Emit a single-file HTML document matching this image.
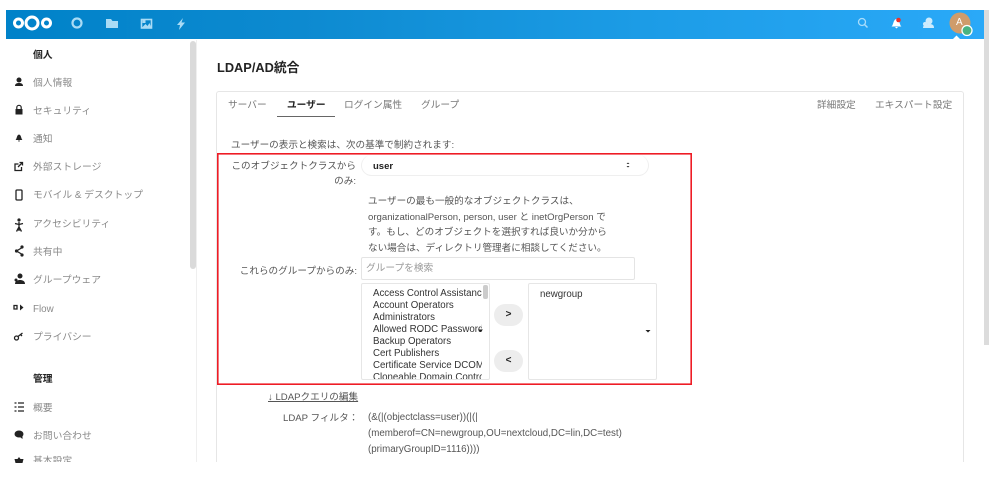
<!DOCTYPE html>
<html><head><meta charset="utf-8"><style>
html,body{margin:0;padding:0;width:1000px;height:501px;background:#fff;overflow:hidden}
body{position:relative;font-family:"Liberation Sans","Noto Sans CJK JP",sans-serif;color:#555}
#w{position:absolute;left:0;top:0;width:1000px;height:501px;filter:blur(.35px)}
.a{position:absolute;white-space:nowrap;line-height:14px}
.n{font-size:9.8px;left:33px;color:#8a8a8a}
.h{font-size:9.8px;left:33px;color:#222;font-weight:bold}
.t{font-size:9.7px;color:#777}
.m{font-size:9.6px;color:#555}
.f{font-size:9.75px;color:#555}
svg{position:absolute;overflow:visible}
</style></head><body><div id="w">
<div class="a" style="left:6px;top:10px;width:978px;height:29px;background:linear-gradient(90deg,#0082c9 0%,#0d8ad0 30%,#1c9ce6 65%,#2aa9f8 100%)"></div>
<svg style="left:0;top:0" width="1000" height="40">
<g fill="none" stroke="#fff">
<circle cx="18.500" cy="23" r="4" stroke-width="3"/><circle cx="32" cy="23" r="6" stroke-width="3"/><circle cx="46.500" cy="23" r="4" stroke-width="3"/>
<circle cx="77" cy="23" r="4.500" stroke-width="2.200" stroke="#a9dbf5"/>
</g>
<path d="M106 19h5l1.500 2h5.500v7h-12z" fill="#a9dbf5"/>
<rect x="141.500" y="19.500" width="10" height="8.500" fill="none" stroke="#a9dbf5" stroke-width="1.600"/>
<path d="M141.500 28l4-4 2 2 2-3 2 5z M142.500 20h3v3h-3z" fill="#a9dbf5"/>
<path d="M183 18l-6 7h3l-1 5 6-7.500h-3.500z" fill="#a9dbf5"/>
<circle cx="862" cy="22" r="3.500" fill="none" stroke="#a8dcfb" stroke-width="1.300"/><path d="M864.500 24.500l3 3" stroke="#a8dcfb" stroke-width="1.500"/>
<path d="M891.500 26.500c2-1 1.500-7 5-7.500 3.500.5 3 6.500 5 7.500z M895 27h3l-1.500 1.500z" fill="#fff"/><circle cx="898.500" cy="20" r="2.300" fill="#e9322d"/>
<circle cx="929" cy="21" r="3.500" fill="#cdebfd"/><path d="M923 28c0-3.500 3-4 6-4s5 .5 5 4z" fill="#cdebfd"/><circle cx="925" cy="24" r="2" fill="#cdebfd"/>
<circle cx="960" cy="23" r="10.500" fill="#cf9c6b"/>
<path d="M953 39l3.500-3.500 3.500 3.500z" fill="#fff"/>
<circle cx="967" cy="30.500" r="5" fill="#49b382" stroke="#fff" stroke-width="1.300"/>
</svg>
<div class="a" style="left:956px;top:16px;font-size:10px;color:#fff">A</div>
<div class="a" style="left:984px;top:10px;width:5px;height:335px;background:#dcdcdc"></div>

<div class="a" style="left:190px;top:41px;width:6px;height:228px;background:#dadada;border-radius:3px"></div>
<div class="a" style="left:196px;top:40px;width:1px;height:422px;background:#efefef"></div>

<div class="a h" style="top:49px">個人</div>
<div class="a n" style="top:77px">個人情報</div>
<div class="a n" style="top:105px">セキュリティ</div>
<div class="a n" style="top:133px">通知</div>
<div class="a n" style="top:161px">外部ストレージ</div>
<div class="a n" style="top:189px">モバイル &amp; デスクトップ</div>
<div class="a n" style="top:218px">アクセシビリティ</div>
<div class="a n" style="top:246px">共有中</div>
<div class="a n" style="top:274px">グループウェア</div>
<div class="a n" style="top:303px">Flow</div>
<div class="a n" style="top:331px">プライバシー</div>
<div class="a h" style="top:373px">管理</div>
<div class="a n" style="top:402px">概要</div>
<div class="a n" style="top:430px">お問い合わせ</div>
<div style="position:absolute;left:0;top:452px;width:196px;height:10px;overflow:hidden"><div class="a n" style="top:3px">基本設定</div></div>

<svg style="left:0;top:0" width="30" height="462">
<g fill="#222">
<circle cx="19" cy="80" r="2.500"/><path d="M15 86c0-2.500 2-3 4-3s4 .5 4 3z"/>
<rect x="15.500" y="109" width="7" height="5.500"/><path d="M16.800 109v-1.500a2.200 2.200 0 0 1 4.400 0v1.500" fill="none" stroke="#222" stroke-width="1.200"/>
<path d="M15.500 140c1.500-1 1-5 3.500-5.500 2.500.5 2 4.500 3.500 5.500z M18 140.500h2l-1 1.500z"/>
</g>
<g fill="none" stroke="#222" stroke-width="1.300">
<path d="M21.500 167v3.500h-6.500v-6.500h3.500"/><path d="M18 167l4-4M19.500 162.500h3v3"/>
<rect x="16" y="190" width="6" height="10" rx="1"/>
<path d="M19 222v9M15 223.500l4 1 4-1M19 227l-2.500 4.500M19 227l2.500 4.500"/>
<path d="M21.500 248l-5 3 5 3"/>
<path d="M17 305.500h-3v3.500h3z" />
<circle cx="16.500" cy="338" r="2"/><path d="M18 336.500l4.500-3.500M20.500 334.500l1.500 1.500"/>
<path d="M18 403h6M18 407h6M18 411h6M14.500 403h2M14.500 407h2M14.500 411h2"/>
</g>
<g fill="#222">
<circle cx="19" cy="220" r="1.600"/>
<circle cx="22" cy="247" r="1.600"/><circle cx="22" cy="255" r="1.600"/><circle cx="16.500" cy="251" r="1.600"/>
<circle cx="20" cy="276" r="2.500"/><path d="M15 284c0-3 2.500-4 5-4s5 1 5 4z"/><circle cx="16" cy="280" r="1.500"/>
<path d="M20 304.500l3.500 3-3.500 3z"/>
<ellipse cx="19" cy="434" rx="4.500" ry="3.500"/><path d="M20 437l2.500 2v-3z"/>
<path d="M19 457l1.500 2h3l-1 4h-7l-1-4h3z"/>
</g>
</svg>

<div class="a" style="left:217px;top:61px;font-size:12.800px;font-weight:bold;color:#222">LDAP/AD統合</div>

<div class="a" style="left:216px;top:91px;width:748px;height:371px;border:1px solid #e6e6e6;border-bottom:0;border-radius:3px 3px 0 0;box-sizing:border-box"></div>
<div class="a t" style="left:228px;top:99px">サーバー</div>
<div class="a" style="left:287px;top:99px;font-size:9.700px;font-weight:bold;color:#222">ユーザー</div>
<div class="a" style="left:277px;top:116px;width:58px;height:1px;background:#666"></div>
<div class="a t" style="left:344px;top:99px">ログイン属性</div>
<div class="a t" style="left:421px;top:99px">グループ</div>
<div class="a t" style="left:817px;top:99px">詳細設定</div>
<div class="a t" style="left:875px;top:99px">エキスパート設定</div>

<div class="a m" style="left:231px;top:139px">ユーザーの表示と検索は、次の基準で制約されます:</div>
<svg style="left:0;top:0" width="700" height="390"><rect x="217.800" y="153.800" width="473.400" height="230.400" fill="none" stroke="#ee1c25" stroke-width="1.600"/></svg>
<div class="a m" style="right:644px;top:160px">このオブジェクトクラスから</div>
<div class="a m" style="right:644px;top:175px">のみ:</div>
<div class="a" style="left:361px;top:155px;width:288px;height:21px;border:1px solid #efefef;border-top:0;border-radius:11px;box-sizing:border-box"></div>
<div class="a" style="left:373px;top:160px;font-size:9.500px;font-weight:bold;color:#222">user</div>
<svg style="left:0;top:0" width="700" height="200"><path d="M626.500 164l1.500-1.500 1.500 1.500z M626.500 166l1.500 1.500 1.500-1.500z" fill="#333"/></svg>
<div class="a m" style="left:368px;top:195px">ユーザーの最も一般的なオブジェクトクラスは、</div>
<div class="a m" style="left:368px;top:211px">organizationalPerson, person, user と inetOrgPerson で</div>
<div class="a m" style="left:368px;top:226px">す。もし、どのオブジェクトを選択すれば良いか分から</div>
<div class="a m" style="left:368px;top:242px">ない場合は、ディレクトリ管理者に相談してください。</div>
<div class="a m" style="right:643px;top:265px">これらのグループからのみ:</div>
<div class="a" style="left:361px;top:257px;width:274px;height:23px;border:1px solid #e4e4e4;border-radius:2px;box-sizing:border-box"></div>
<div class="a" style="left:366px;top:262px;font-size:9.700px;color:#999">グループを検索</div>

<div class="a" style="left:361px;top:283px;width:129px;height:97px;border:1px solid #e6e6e6;border-radius:2px;box-sizing:border-box;overflow:hidden">
<div style="position:absolute;left:11px;top:4px;width:109px;overflow:hidden;font-size:9.700px;line-height:12px;color:#333">Access Control Assistance<br>Account Operators<br>Administrators<br>Allowed RODC Password<br>Backup Operators<br>Cert Publishers<br>Certificate Service DCOM<br>Cloneable Domain Controllers</div>
<div style="position:absolute;left:121px;top:1px;width:5px;height:14px;background:#ccc;border-radius:2px"></div>
</div>
<svg style="left:0;top:0" width="700" height="340"><path d="M478 329.500h5l-2.500 2.500z M645.500 330h5l-2.500 2.500z" fill="#222"/></svg>
<div class="a" style="left:494px;top:304px;width:29px;height:22px;background:#ededed;border-radius:11px;font-size:10px;font-weight:bold;line-height:22px;text-align:center;color:#222">&gt;</div>
<div class="a" style="left:494px;top:350px;width:29px;height:22px;background:#ededed;border-radius:11px;font-size:10px;font-weight:bold;line-height:22px;text-align:center;color:#222">&lt;</div>
<div class="a" style="left:528px;top:283px;width:129px;height:97px;border:1px solid #e6e6e6;border-radius:2px;box-sizing:border-box"></div>
<div class="a" style="left:540px;top:288px;font-size:9.700px;line-height:14px;color:#333">newgroup</div>

<div class="a m" style="left:268px;top:391px;text-decoration:underline">↓ LDAPクエリの編集</div>
<div class="a m" style="left:283px;top:412px">LDAP フィルタ：</div>
<div class="a f" style="left:368px;top:411px">(&amp;(|(objectclass=user))(|(|</div>
<div class="a f" style="left:368px;top:427px">(memberof=CN=newgroup,OU=nextcloud,DC=lin,DC=test)</div>
<div class="a f" style="left:368px;top:443px">(primaryGroupID=1116))))</div>
</div></body></html>
